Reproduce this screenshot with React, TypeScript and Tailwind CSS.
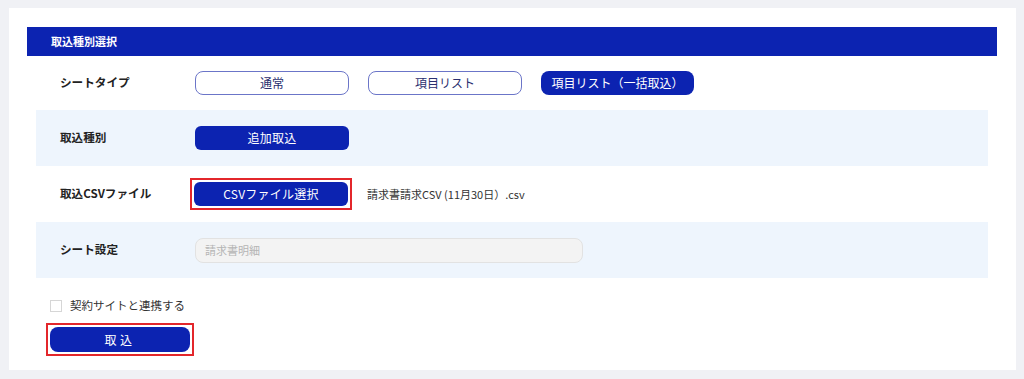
const FONT = { fontFamily: '"Noto Sans CJK JP", "Noto Sans", sans-serif' };

function OutlineButton({ label }: { label: string }) {
  return (
    <button className="flex h-[24px] w-[154px] items-center justify-center rounded-[8px] border border-[#6b75c8] bg-white text-[12px] text-[#2a3070]">
      {label}
    </button>
  );
}

function FilledButton({ label }: { label: string }) {
  return (
    <button className="flex h-[24px] w-[154px] items-center justify-center rounded-[6px] bg-[#0c23b1] text-[12px] tracking-[0.02em] text-white">
      {label}
    </button>
  );
}

function Row({ label, shaded, tall = true, children }: { label: string; shaded?: boolean; tall?: boolean; children: React.ReactNode }) {
  return (
    <div className={`flex items-center ${tall ? 'h-[56px]' : 'h-[54px]'} ${shaded ? 'bg-[#eef5fd]' : 'bg-white'}`}>
      <div className="w-[159px] pl-[24px] text-[11.6px] font-bold text-[#222]">{label}</div>
      {children}
    </div>
  );
}

export default function App() {
  return (
    <div style={FONT} className="h-[379px] w-[1024px] bg-[#f0f1f5] pl-[9px] pr-[8px] pt-[8px]">
      <div className="h-[362px] bg-white pl-[18px] pr-[19px] pt-[19px]">
        <div className="flex h-[29px] items-center bg-[#0c23b1] pl-[24px] text-[11px] font-bold text-white">
          取込種別選択
        </div>
        <div className="mx-[9px]">
          <Row label="シートタイプ" tall={false}>
            <div className="flex gap-[19px]">
              <OutlineButton label="通常" />
              <OutlineButton label="項目リスト" />
              <button className="flex h-[24px] w-[153px] items-center justify-center rounded-[8px] bg-[#0c23b1] text-[12px] text-white">
                項目リスト（一括取込）
              </button>
            </div>
          </Row>
          <Row label="取込種別" shaded>
            <FilledButton label="追加取込" />
          </Row>
          <Row label="取込CSVファイル">
            <div className="-ml-[5px] border-2 border-[#e3262b] p-[2px]">
              <FilledButton label="CSVファイル選択" />
            </div>
            <span className="ml-[15px] text-[11px] text-[#333]">請求書請求CSV (11月30日）.csv</span>
          </Row>
          <Row label="シート設定" shaded>
            <div className="flex h-[25px] w-[388px] items-center rounded-[8px] border border-[#e2e2e2] bg-[#f3f3f3] pl-[9px] text-[11px] text-[#b5b5b5]">
              請求書明細
            </div>
          </Row>
        </div>
        <div className="mt-[19px] flex items-center pl-[23px]">
          <span className="h-[12px] w-[12px] border border-[#d6d6d6] bg-white" />
          <span className="ml-[8px] text-[11.5px] text-[#333]">契約サイトと連携する</span>
        </div>
        <div className="mt-[9px] ml-[19px] w-[148px] border-2 border-[#e3262b] p-[2px]">
          <button className="flex h-[25px] w-full items-center justify-center rounded-[8px] bg-[#0c23b1] text-[12px] tracking-[0.3em] text-white">
            取込
          </button>
        </div>
      </div>
    </div>
  );
}
